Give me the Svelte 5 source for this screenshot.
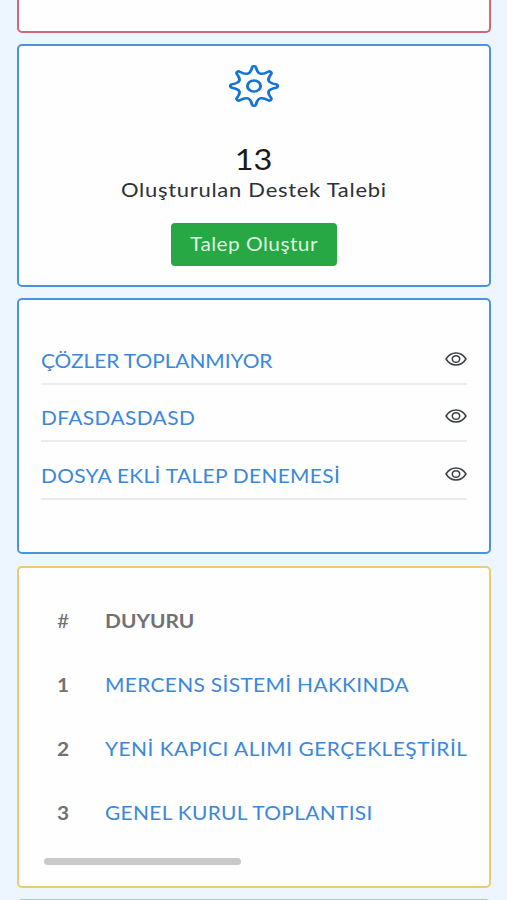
<script lang="ts">
	interface Row {
		title: string;
		spacing: number;
	}

	const ticketCount = 13;

	const tickets: Row[] = [
		{ title: 'ÇÖZLER TOPLANMIYOR', spacing: -0.05 },
		{ title: 'DFASDASDASD', spacing: 0.36 },
		{ title: 'DOSYA EKLİ TALEP DENEMESİ', spacing: 0.29 }
	];

	const notices: Row[] = [
		{ title: 'MERCENS SİSTEMİ HAKKINDA', spacing: 0.31 },
		{ title: 'YENİ KAPICI ALIMI GERÇEKLEŞTİRİL', spacing: 0.45 },
		{ title: 'GENEL KURUL TOPLANTISI', spacing: 0.3 }
	];

	// eight rounded teeth around the origin
	function gearPath(): string {
		const at = (r: number, a: number) =>
			`${(r * Math.sin(a)).toFixed(2)} ${(-r * Math.cos(a)).toFixed(2)}`;
		const step = Math.PI / 4;
		let d = `M${at(18.2, -0.09)}`;
		for (let i = 0; i < 8; i++) {
			const a = i * step;
			d += `C${at(19.8, a - 0.07)} ${at(19.8, a + 0.07)} ${at(18.2, a + 0.09)}`;
			d += `C${at(11.8, a + 0.26)} ${at(11.8, a + step - 0.26)} ${at(18.2, a + step - 0.09)}`;
		}
		return d + 'Z';
	}
</script>

<main>
	<section class="card red"></section>

	<section class="card blue summary">
		<svg class="gear" viewBox="-20.5 -20.5 41 41" preserveAspectRatio="none">
			<path d={gearPath()} />
			<circle r="5.4" />
		</svg>
		<div class="count">{ticketCount}</div>
		<div class="caption">Oluşturulan Destek Talebi</div>
		<button type="button"><span>Talep Oluştur</span></button>
	</section>

	<section class="card blue tickets">
		{#each tickets as ticket (ticket.title)}
			<div class="ticket">
				<a href="#ticket" style="letter-spacing: {ticket.spacing}px">{ticket.title}</a>
				<svg class="eye" viewBox="0 0 22 14">
					<path d="M1 7C3.5 3 7 1 11 1s7.5 2 10 6c-2.5 4-6 6-10 6S3.5 11 1 7Z" />
					<ellipse cx="11" cy="7" rx="3.7" ry="3.3" />
				</svg>
			</div>
		{/each}
	</section>

	<section class="card yellow notices">
		<div class="notice head"><span class="num">#</span><b>DUYURU</b></div>
		{#each notices as notice, i (notice.title)}
			<div class="notice">
				<span class="num">{i + 1}</span>
				<a href="#notice" style="letter-spacing: {notice.spacing}px">{notice.title}</a>
			</div>
		{/each}
		<div class="scrollbar"></div>
	</section>

	<section class="card green"></section>
</main>

<style>
	:global(body) {
		background: #edf6ff;
	}
	main {
		height: 900px;
		overflow: hidden;
		padding: 0 16px 0 17px;
		box-sizing: border-box;
		display: flex;
		flex-direction: column;
		gap: 12px;
		font-family: Lato, 'Open Sans', sans-serif;
		font-size: 19px;
		color: #2d3034;
	}
	.card {
		box-sizing: border-box;
		flex: none;
		background: #fefefe;
		border: 2px solid;
		border-radius: 5px;
	}
	.red {
		height: 33px;
		border-color: #d0687a;
		border-top: 0;
		border-radius: 0 0 5px 5px;
		margin-bottom: -1px;
	}
	.blue {
		border-color: #4b94dc;
	}
	.yellow {
		border-color: #eccb70;
	}
	.green {
		height: 40px;
		margin-top: -1px;
		border-color: #a5d2bd;
	}
	.summary {
		height: 243px;
		display: flex;
		flex-direction: column;
		align-items: center;
		padding-top: 19px;
		margin-bottom: -1px;
	}
	.gear {
		width: 50px;
		height: 42px;
		fill: none;
		stroke: #1673d6;
		stroke-width: 2.4;
	}
	/* wide letterforms */
	.count,
	.caption,
	button span,
	a,
	b,
	.num {
		display: block;
		transform: scaleX(1.1);
	}
	a,
	b,
	.num {
		transform-origin: left;
	}
	.count {
		margin-top: 35px;
		font-size: 28.5px;
		line-height: 34px;
		transform: scaleX(1.14);
		color: #181a1c;
	}
	.caption {
		margin-top: -1px;
		font-size: 20px;
		line-height: 28px;
		letter-spacing: 0.65px;
	}
	button {
		margin-top: 20px;
		width: 166px;
		height: 43px;
		border: 0;
		border-radius: 4px;
		background: #28a745;
		color: #d9f6df;
		font: inherit;
	}
	button span {
		letter-spacing: 0.4px;
		margin-top: -2px;
	}
	.tickets {
		height: 256px;
		padding: 27px 22px 0;
	}
	.ticket {
		display: flex;
		align-items: flex-end;
		justify-content: space-between;
		height: 57.7px;
		box-sizing: border-box;
		border-bottom: 2px solid #ececee;
		padding-bottom: 10px;
	}
	a {
		color: #3a87db;
		text-decoration: none;
		white-space: nowrap;
		line-height: 24px;
	}
	.eye {
		width: 22px;
		height: 14px;
		margin-bottom: 7px;
		fill: none;
		stroke: #3c3e41;
		stroke-width: 1.5;
	}
	.notices {
		height: 322px;
		padding: 21px 22px 0;
	}
	.notice {
		display: flex;
		align-items: center;
		height: 64px;
		padding-left: 16px;
	}
	.num {
		flex: none;
		width: 48px;
		font-weight: 700;
		line-height: 24px;
		color: #717274;
	}
	.head .num {
		font-weight: 400;
	}
	b {
		color: #717274;
		line-height: 24px;
	}
	.scrollbar {
		width: 197px;
		height: 7px;
		margin: 13px 0 0 3px;
		border-radius: 4px;
		background: #c9c9ca;
	}
</style>
